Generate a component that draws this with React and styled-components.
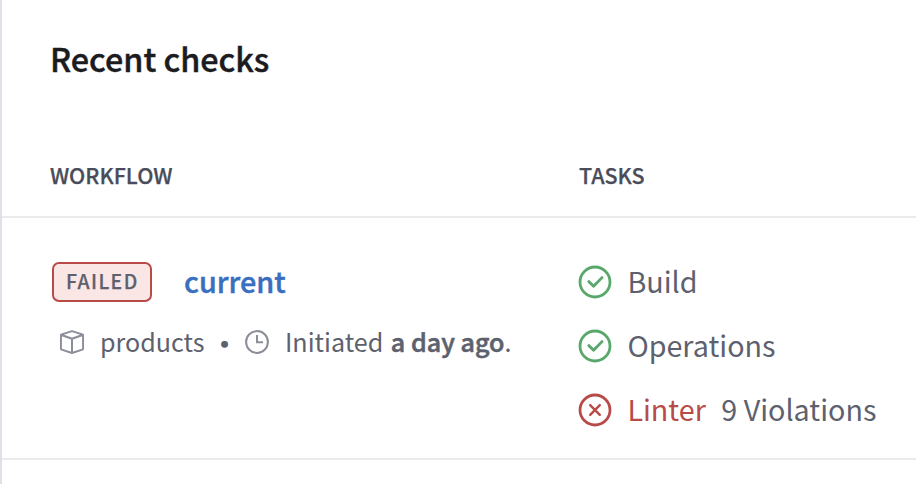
import React from "react";
import styled, { createGlobalStyle } from "styled-components";

const GlobalStyle = createGlobalStyle`
  * { box-sizing: border-box; }
  body {
    margin: 0;
    background: #fff;
    font-family: "Noto Sans CJK SC", "Source Sans Pro", sans-serif;
    color: #5d616e;
    overflow: hidden;
  }
`;

const Panel = styled.main`
  width: 916px;
  height: 484px;
  border-left: 2px solid #dfe1e8;
  background: #fff;
`;

const Title = styled.h1`
  margin: 0;
  height: 136px;
  padding: 38px 0 0 48px;
  font-size: 32.3px;
  line-height: 40px;
  font-weight: 500;
  -webkit-text-stroke: 0.45px;
  color: #1b1b22;
  white-space: nowrap;
`;

const Row = styled.div`
  display: grid;
  grid-template-columns: 529px 1fr;
  padding-left: 48px;
  border-bottom: 2px solid #ebebed;
`;

const HeaderRow = styled(Row)`
  height: 82px;
`;

const BodyRow = styled(Row)`
  height: 242px;
`;

const HeaderCell = styled.div`
  padding-top: 24px;
  font-size: 21.5px;
  line-height: 30px;
  font-weight: 500;
  -webkit-text-stroke: 0.25px;
  color: #494c59;
`;

const WorkflowCell = styled.div`
  padding: 44px 0 0 2px;
`;

const WorkflowHead = styled.div`
  display: flex;
  align-items: center;
  height: 40px;
`;

const Badge = styled.span`
  width: 100px;
  height: 40px;
  padding: 0 0 3px 12px;
  border: 2px solid #b84a48;
  border-radius: 7px;
  background: #fbe6e6;
  font-size: 19.4px;
  line-height: 33px;
  font-weight: 500;
  -webkit-text-stroke: 0.25px;
  letter-spacing: 1.4px;
  white-space: nowrap;
`;

const WorkflowLink = styled.a`
  margin-left: 32px;
  padding-bottom: 3px;
  font-size: 28.8px;
  line-height: 36px;
  font-weight: 500;
  -webkit-text-stroke: 0.45px;
  color: #3a6ebf;
`;

const Meta = styled.div`
  display: flex;
  align-items: center;
  height: 28px;
  margin-top: 26px;
  padding-left: 8px;
  font-size: 25.1px;
  line-height: 28px;
  white-space: nowrap;
`;

const MetaText = styled.span`
  width: ${(p) => p.$width}px;
  margin-left: 16px;
  padding-bottom: 2px;
  line-height: 28px;
`;

const Bullet = styled.span`
  width: 41px;
  padding-top: 1px;
  text-align: center;
  -webkit-text-stroke: 1.6px;
`;

const Strong = styled.strong`
  margin-left: 2px;
  font-weight: 500;
  -webkit-text-stroke: 0.55px;
`;

const TaskList = styled.ul`
  list-style: none;
  margin: 0;
  padding: 46px 0 0;
  display: flex;
  flex-direction: column;
  gap: 28px;
`;

const Task = styled.li`
  display: flex;
  align-items: center;
  height: 36px;
  margin-left: -1px;
`;

const TaskLabel = styled.span`
  margin-left: ${(p) => p.$gap}px;
  padding-bottom: 3px;
  font-size: 28.7px;
  line-height: 36px;
  color: ${(p) => (p.$failed ? "#b84a48" : "#5d616e")};
  white-space: nowrap;
`;

const Icon = styled.svg`
  flex: none;
  fill: none;
  stroke: ${(p) => p.$color};
  stroke-width: ${(p) => p.$stroke};
  stroke-linecap: round;
  stroke-linejoin: round;
`;

const StatusIcon = ({ failed }) => (
  <Icon width="34" height="34" viewBox="-17 -17 34 34" $color={failed ? "#b84a48" : "#58a86c"} $stroke={2.8}>
    <circle r="15" />
    {failed ? (
      <path d="M-4.8 -4.8 4.8 4.8M4.8 -4.8-4.8 4.8" strokeWidth="2.4" />
    ) : (
      <path d="M-6.2 -.6-1.4 4.3 7-4.4" />
    )}
  </Icon>
);

const CubeIcon = () => (
  <Icon width="24" height="24" viewBox="0 0 24 24" $color="#8b8e98" $stroke={2}>
    <path d="M12 1.1 22.3 4.4Q23.1 4.7 23.1 5.5V18.5Q23.1 19.3 22.3 19.6L12 23 1.7 19.6Q.9 19.3 .9 18.5V5.5Q.9 4.7 1.7 4.4ZM1.5 5 12 8.8 22.5 5M12 8.8V22.5" />
  </Icon>
);

const ClockIcon = () => (
  <Icon width="24" height="24" viewBox="0 0 24 24" $color="#8b8e98" $stroke={2}>
    <circle cx="12" cy="12" r="10.9" />
    <path d="M12 5V12.2H18" strokeLinecap="butt" strokeLinejoin="miter" />
  </Icon>
);

export default function App() {
  return (
    <>
      <GlobalStyle />
      <Panel>
        <Title>Recent checks</Title>
        <HeaderRow>
          <HeaderCell>WORKFLOW</HeaderCell>
          <HeaderCell>TASKS</HeaderCell>
        </HeaderRow>
        <BodyRow>
          <WorkflowCell>
            <WorkflowHead>
              <Badge>FAILED</Badge>
              <WorkflowLink>current</WorkflowLink>
            </WorkflowHead>
            <Meta>
              <CubeIcon />
              <MetaText $width={104}>products</MetaText>
              <Bullet>•</Bullet>
              <ClockIcon />
              <MetaText $width={230}>
                Initiated <Strong>a day ago</Strong>.
              </MetaText>
            </Meta>
          </WorkflowCell>
          <TaskList>
            <Task>
              <StatusIcon />
              <TaskLabel $gap={15.4}>Build</TaskLabel>
            </Task>
            <Task>
              <StatusIcon />
              <TaskLabel $gap={15.4}>Operations</TaskLabel>
            </Task>
            <Task>
              <StatusIcon failed />
              <TaskLabel $gap={15.4} $failed>Linter</TaskLabel>
              <TaskLabel $gap={15.6}>9 Violations</TaskLabel>
            </Task>
          </TaskList>
        </BodyRow>
      </Panel>
    </>
  );
}
